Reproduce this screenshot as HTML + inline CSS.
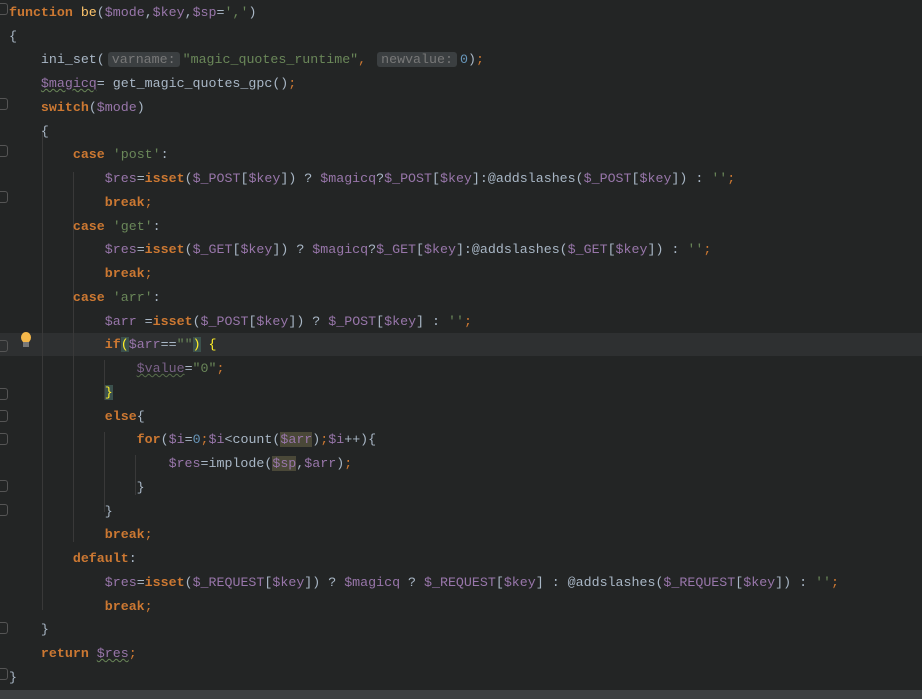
<!DOCTYPE html>
<html><head><meta charset="utf-8"><style>
body{margin:0;width:922px;height:699px;background:#232525;overflow:hidden;position:relative;font-family:"Liberation Mono","Noto Sans CJK SC",monospace;font-size:13.3px;color:#a9b7c6}
.l{position:absolute;left:9px;height:23.75px;line-height:23.75px;white-space:pre}
.k{color:#cc7832;font-weight:bold}
.v{color:#9876aa}
.s{color:#6a8759}
.n{color:#6897bb}
.f{color:#ffc66d}
.p{color:#cc7832}
.h{background:#3b3f41;color:#787878;border-radius:3px;padding:0 4px;margin:0 3px}
.g{position:absolute;width:1px;background:#393939}
.cur{position:absolute;left:0;top:333px;width:922px;height:23px;background:#2e3031}
.m{background:#3b514d;color:#ffef28}
.u{background:#4a4838}
.w{text-decoration:underline wavy #6a8759;text-decoration-thickness:1px}
.fold{position:absolute;left:0;width:7px;height:10px;border:1px solid #555;border-left:none;border-radius:0 3px 3px 0}
</style></head><body>
<div class="cur"></div>
<div class="g" style="left:42px;top:130px;height:480px"></div>
<div class="g" style="left:73px;top:172px;height:370px"></div>
<div class="g" style="left:104px;top:360px;height:40px"></div>
<div class="g" style="left:104px;top:432px;height:80px"></div>
<div class="g" style="left:135px;top:455px;height:40px"></div>
<div class="fold" style="top:3px"></div><div class="fold" style="top:98px"></div><div class="fold" style="top:145px"></div><div class="fold" style="top:191px"></div><div class="fold" style="top:340px"></div><div class="fold" style="top:388px"></div><div class="fold" style="top:410px"></div><div class="fold" style="top:433px"></div><div class="fold" style="top:480px"></div><div class="fold" style="top:504px"></div><div class="fold" style="top:622px"></div><div class="fold" style="top:668px"></div>
<div style="position:absolute;left:21px;top:332px;width:10px;height:11px;border-radius:50%;background:#f5b84a"></div>
<div style="position:absolute;left:23px;top:342px;width:6px;height:5px;background:#777"></div>

<div class="l" style="top:1px"><span class="k">function</span> <span class="f">be</span>(<span class="v">$mode</span>,<span class="v">$key</span>,<span class="v">$sp</span>=<span class="s">','</span>)</div>
<div class="l" style="top:25px">{</div>
<div class="l" style="top:48px">    ini_set(<span class="h">varname:</span><span class="s">"magic_quotes_runtime"</span><span class="p">,</span> <span class="h">newvalue:</span><span class="n">0</span>)<span class="p">;</span></div>
<div class="l" style="top:72px">    <span class="v w">$magicq</span>= get_magic_quotes_gpc()<span class="p">;</span></div>
<div class="l" style="top:96px">    <span class="k">switch</span>(<span class="v">$mode</span>)</div>
<div class="l" style="top:120px">    {</div>
<div class="l" style="top:143px">        <span class="k">case</span> <span class="s">'post'</span>:</div>
<div class="l" style="top:167px">            <span class="v">$res</span>=<span class="k">isset</span>(<span class="v">$_POST</span>[<span class="v">$key</span>]) ? <span class="v">$magicq</span>?<span class="v">$_POST</span>[<span class="v">$key</span>]:@addslashes(<span class="v">$_POST</span>[<span class="v">$key</span>]) : <span class="s">''</span><span class="p">;</span></div>
<div class="l" style="top:191px">            <span class="k">break</span><span class="p">;</span></div>
<div class="l" style="top:215px">        <span class="k">case</span> <span class="s">'get'</span>:</div>
<div class="l" style="top:238px">            <span class="v">$res</span>=<span class="k">isset</span>(<span class="v">$_GET</span>[<span class="v">$key</span>]) ? <span class="v">$magicq</span>?<span class="v">$_GET</span>[<span class="v">$key</span>]:@addslashes(<span class="v">$_GET</span>[<span class="v">$key</span>]) : <span class="s">''</span><span class="p">;</span></div>
<div class="l" style="top:262px">            <span class="k">break</span><span class="p">;</span></div>
<div class="l" style="top:286px">        <span class="k">case</span> <span class="s">'arr'</span>:</div>
<div class="l" style="top:310px">            <span class="v">$arr</span> =<span class="k">isset</span>(<span class="v">$_POST</span>[<span class="v">$key</span>]) ? <span class="v">$_POST</span>[<span class="v">$key</span>] : <span class="s">''</span><span class="p">;</span></div>
<div class="l" style="top:333px">            <span class="k">if</span><span class="m">(</span><span class="v">$arr</span>==<span class="s">""</span><span class="m">)</span> <span style="color:#ffef28">{</span></div>
<div class="l" style="top:357px">                <span class="v w" style="opacity:.75">$value</span>=<span class="s">"0"</span><span class="p">;</span></div>
<div class="l" style="top:381px">            <span class="m">}</span></div>
<div class="l" style="top:405px">            <span class="k">else</span>{</div>
<div class="l" style="top:428px">                <span class="k">for</span>(<span class="v">$i</span>=<span class="n">0</span><span class="p">;</span><span class="v">$i</span>&lt;count(<span class="v u">$arr</span>)<span class="p">;</span><span class="v">$i</span>++){</div>
<div class="l" style="top:452px">                    <span class="v">$res</span>=implode(<span class="v u">$sp</span>,<span class="v">$arr</span>)<span class="p">;</span></div>
<div class="l" style="top:476px">                }</div>
<div class="l" style="top:500px">            }</div>
<div class="l" style="top:523px">            <span class="k">break</span><span class="p">;</span></div>
<div class="l" style="top:547px">        <span class="k">default</span>:</div>
<div class="l" style="top:571px">            <span class="v">$res</span>=<span class="k">isset</span>(<span class="v">$_REQUEST</span>[<span class="v">$key</span>]) ? <span class="v">$magicq</span> ? <span class="v">$_REQUEST</span>[<span class="v">$key</span>] : @addslashes(<span class="v">$_REQUEST</span>[<span class="v">$key</span>]) : <span class="s">''</span><span class="p">;</span></div>
<div class="l" style="top:595px">            <span class="k">break</span><span class="p">;</span></div>
<div class="l" style="top:618px">    }</div>
<div class="l" style="top:642px">    <span class="k">return</span> <span class="v w">$res</span><span class="p">;</span></div>
<div class="l" style="top:666px">}</div>
<div style="position:absolute;left:0;top:690px;width:922px;height:9px;background:#3c3f41"></div>
</body></html>
